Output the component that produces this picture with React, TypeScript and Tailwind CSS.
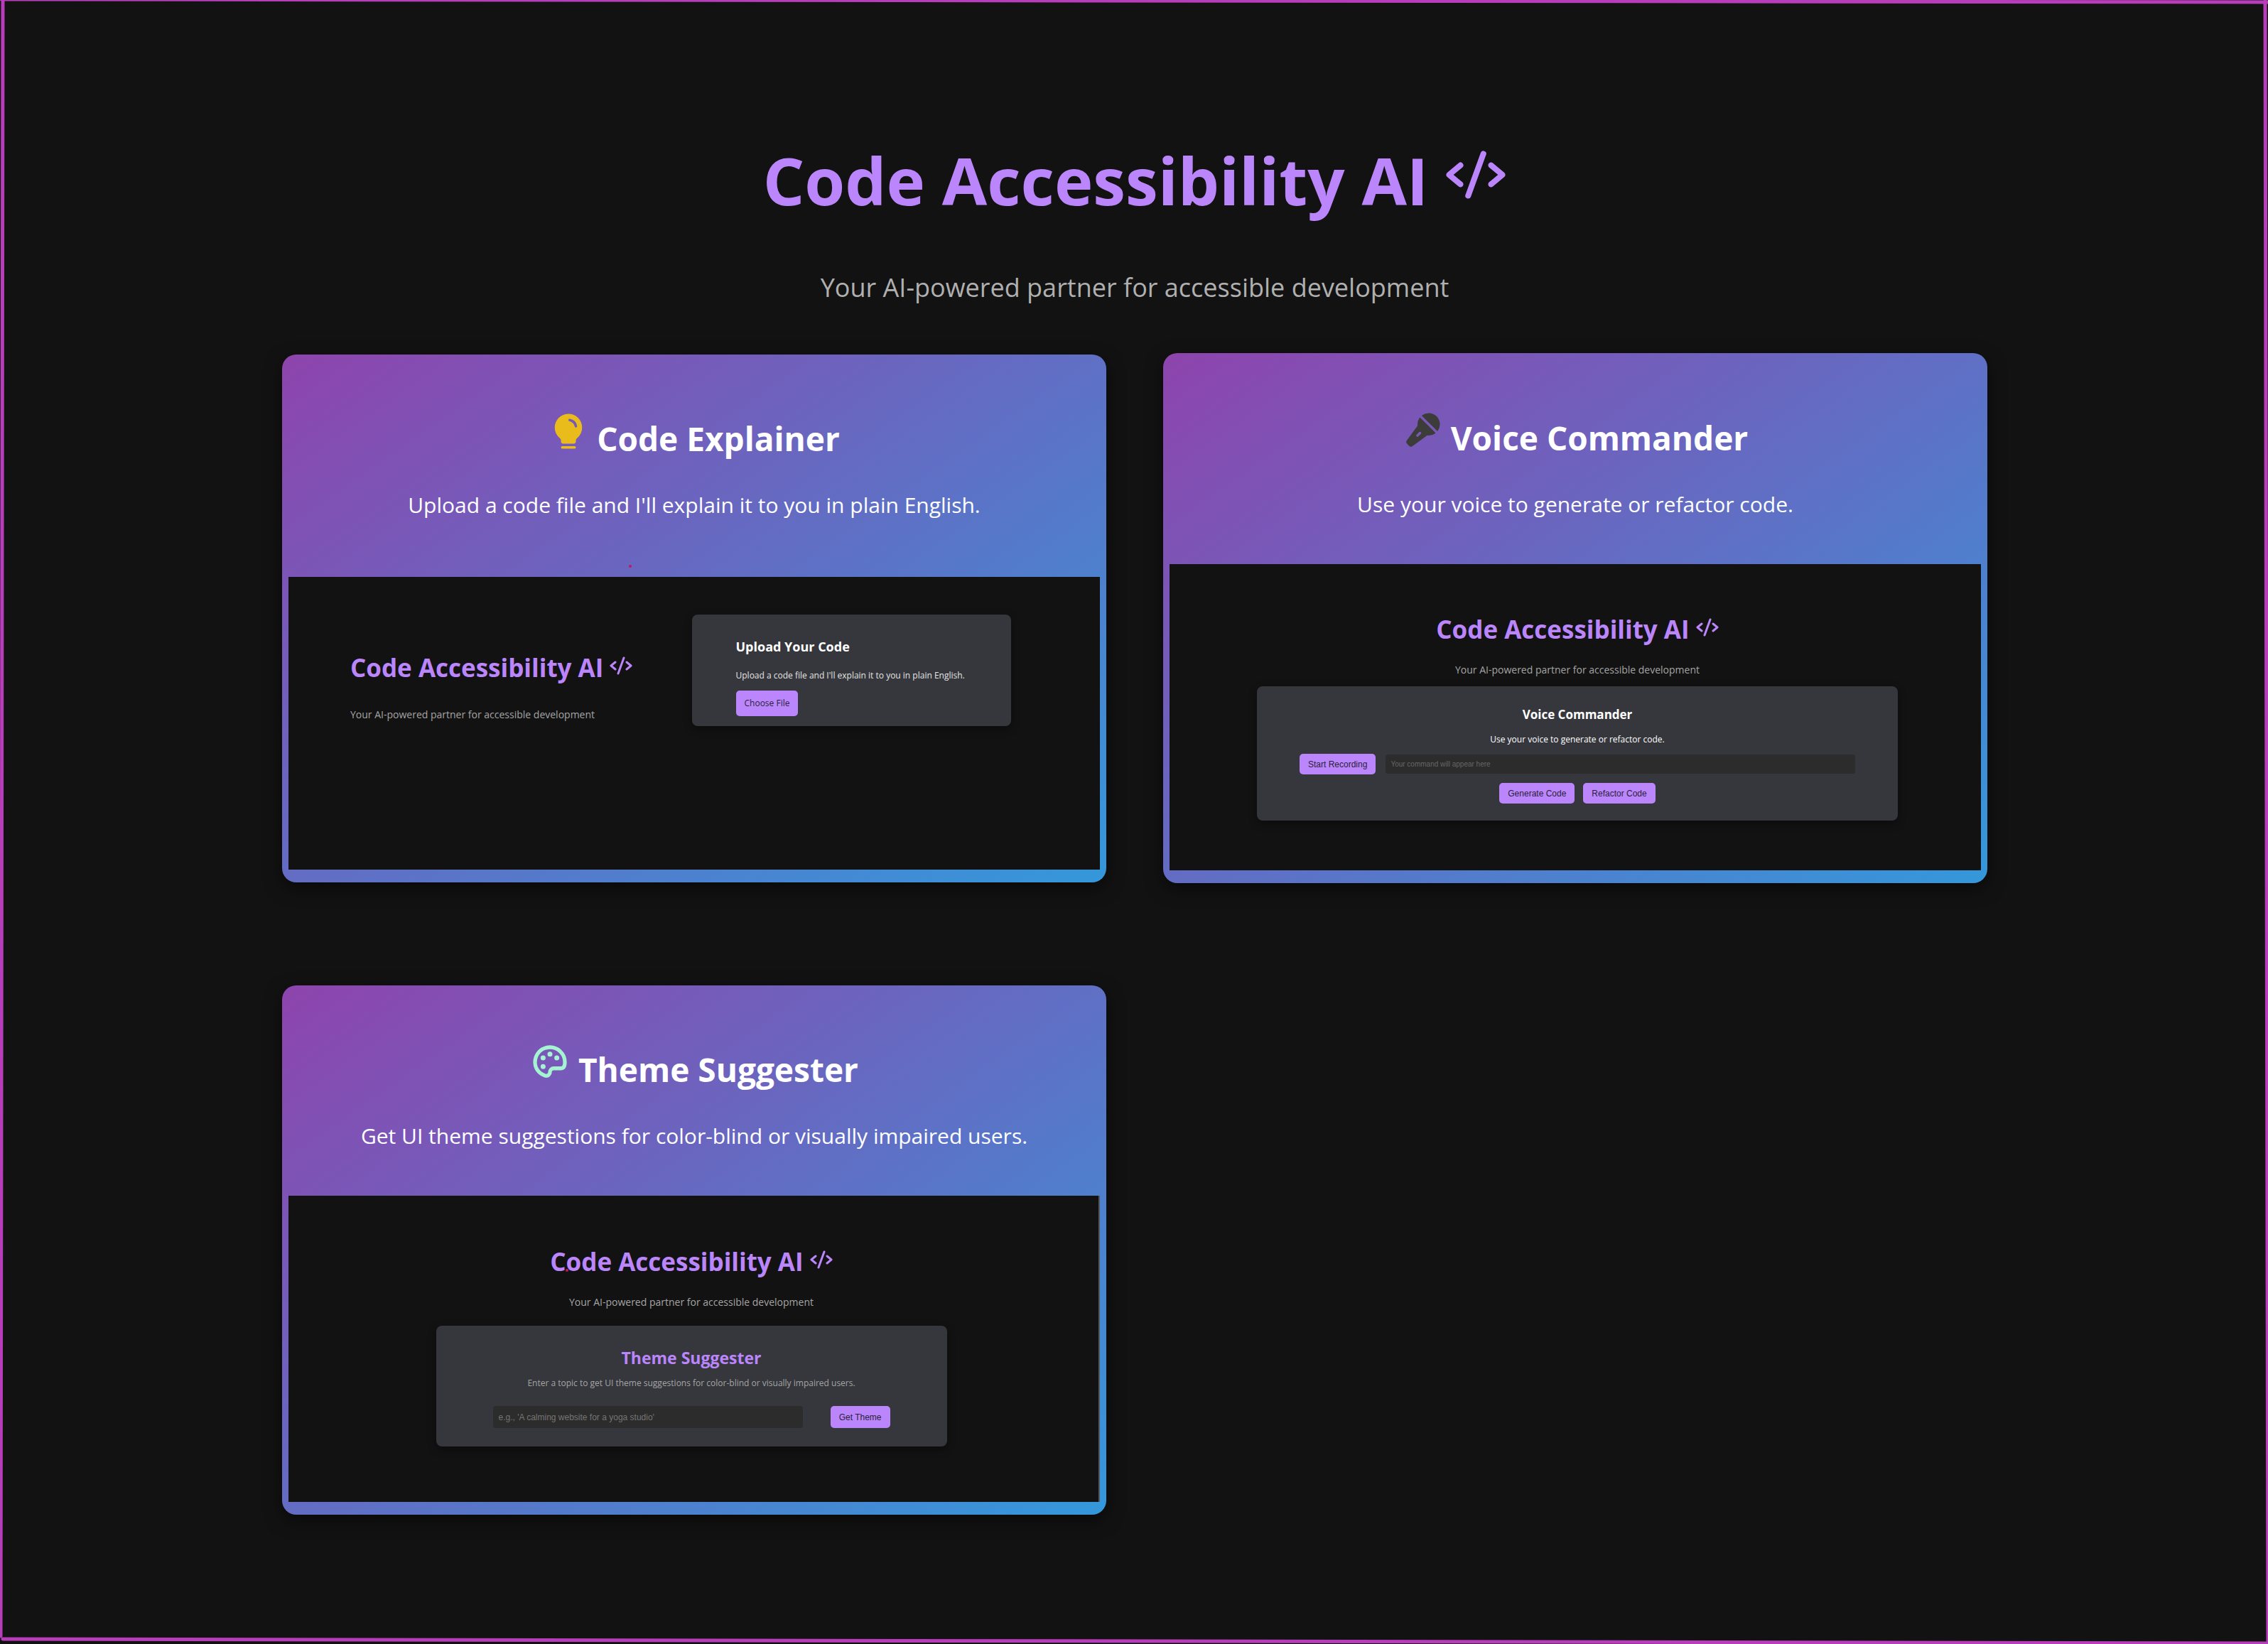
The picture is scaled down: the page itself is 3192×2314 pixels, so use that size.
import type { ReactNode } from 'react';
import {
  PiCodeBold,
  PiLightbulbFill,
  PiMicrophoneStageFill,
  PiPaletteBold,
} from 'react-icons/pi';

const ARIAL = "font-['Liberation_Sans',sans-serif]";
const BUTTON = 'shrink-0 cursor-pointer rounded-[5px] bg-[#bb86fc] px-3 text-center text-[#2a1f38]';

function Brand() {
  return (
    <h2 className="text-[35px] leading-[48px] font-bold whitespace-nowrap text-[#bb86fc]">
      Code Accessibility AI <PiCodeBold className="inline size-8 align-baseline" />
    </h2>
  );
}

function Tagline({ className }: { className: string }) {
  return (
    <p className={`text-[14px] leading-5 text-[#a5a5a5] ${className}`}>
      Your AI-powered partner for accessible development
    </p>
  );
}

function Panel({ className, children }: { className: string; children: ReactNode }) {
  return (
    <div className={`rounded-lg bg-[#36373c] shadow-[0_4px_12px_rgba(0,0,0,0.4)] ${className}`}>
      {children}
    </div>
  );
}

function FeatureCard({
  icon,
  title,
  text,
  head,
  children,
}: {
  icon: ReactNode;
  title: string;
  text: string;
  head: string;
  children: ReactNode;
}) {
  return (
    <section className="relative rounded-[20px] bg-[linear-gradient(145deg,#8e44ad,#3498db)] px-[9px] pb-[18px] shadow-[0_8px_24px_rgba(0,0,0,0.5)]">
      <div className={`text-center text-white ${head}`}>
        <h2 className="text-[46px] leading-[80px] font-bold">
          {icon} {title}
        </h2>
        <p className="mt-[30px] text-[30px] leading-[48px]">{text}</p>
      </div>
      {children}
    </section>
  );
}

function Frame() {
  return (
    <svg
      className="pointer-events-none absolute inset-0 size-full"
      viewBox="0 0 3192 2314"
      preserveAspectRatio="none"
      fill="none"
      stroke="#b83dba"
      strokeWidth="5"
      strokeLinecap="round"
      aria-hidden="true"
    >
      <path d="M2 -1L3192 3" />
      <path d="M4 0L1 2303" />
      <path d="M4 2307L3192 2313" />
      <path d="M3188 2L3192 2312" />
    </svg>
  );
}

export default function App() {
  return (
    <div className="relative min-h-screen overflow-hidden bg-[#121212] pt-[190px] pr-[395px] pb-[180px] pl-[397px] font-['Open_Sans',sans-serif]">
      <Frame />
      <header className="text-center">
        <h1 className="text-[92px] leading-[128px] font-bold text-[#bb86fc]">
          Code Accessibility AI <PiCodeBold className="inline size-[86px] align-baseline" />
        </h1>
        <p className="mt-[63px] text-[36px] leading-[48px] text-[#b0b0b0]">
          Your AI-powered partner for accessible development
        </p>
      </header>

      <main className="mt-[68px] grid grid-cols-2 items-center gap-x-20 gap-y-36">
        <FeatureCard
          icon={<PiLightbulbFill className="inline size-14 align-baseline text-[#e9bc1b]" />}
          title="Code Explainer"
          text="Upload a code file and I'll explain it to you in plain English."
          head="pt-[78px] pb-[77px]"
        >
          <span className="absolute top-[296px] left-[488px] size-1 rounded-full bg-[#c2185b]" />
          <div className="grid min-h-[412px] grid-cols-[480fr_449fr] items-start bg-[#121212] pt-[53px] pr-[125px] pl-[87px]">
            <div className="pt-[51px]">
              <Brand />
              <Tagline className="mt-8" />
            </div>
            <Panel className="px-[62px] pt-[33px] pb-[14px]">
              <h3 className="text-[18px] leading-6 font-bold text-white">Upload Your Code</h3>
              <p className="mt-[19px] text-[12px] leading-5 text-[#e4e4e4]">
                Upload a code file and I'll explain it to you in plain English.
              </p>
              <button type="button" className={`mt-[11px] block h-9 text-[12px] ${BUTTON}`}>
                Choose File
              </button>
            </Panel>
          </div>
        </FeatureCard>

        <FeatureCard
          icon={<PiMicrophoneStageFill className="inline size-14 align-baseline text-[#3c3c3a]" />}
          title="Voice Commander"
          text="Use your voice to generate or refactor code."
          head="pt-[79px] pb-[60px]"
        >
          <div className="flex min-h-[431px] flex-col items-center bg-[#121212] pt-[68px] pl-[6px] text-center">
            <Brand />
            <Tagline className="mt-[23px]" />
            <Panel className="mt-[13px] w-full max-w-[902px] px-[60px] pt-7 pb-6">
              <h3 className="text-[17px] leading-6 font-bold text-white">Voice Commander</h3>
              <p className="mt-[13px] text-[12px] leading-5 text-white">
                Use your voice to generate or refactor code.
              </p>
              <div className="mt-[10px] flex items-center gap-[14px]">
                <button type="button" className={`h-[29px] text-[12px] ${ARIAL} ${BUTTON}`}>
                  Start Recording
                </button>
                <input
                  aria-label="Your command"
                  placeholder="Your command will appear here"
                  className={`h-[27px] min-w-0 flex-1 rounded-[4px] bg-[#2c2c2c] px-[7px] text-[10px] text-white placeholder:text-[#666666] ${ARIAL}`}
                />
              </div>
              <div className="mt-3 flex justify-center gap-3">
                <button type="button" className={`h-[29px] text-[12px] ${ARIAL} ${BUTTON}`}>
                  Generate Code
                </button>
                <button type="button" className={`h-[29px] text-[12px] ${ARIAL} ${BUTTON}`}>
                  Refactor Code
                </button>
              </div>
            </Panel>
          </div>
        </FeatureCard>

        <FeatureCard
          icon={<PiPaletteBold className="inline size-14 align-baseline text-[#a5f3d3]" />}
          title="Theme Suggester"
          text="Get UI theme suggestions for color-blind or visually impaired users."
          head="pt-[78px] pb-[60px]"
        >
          <div className="flex min-h-[431px] flex-col items-center border-r-2 border-[#56585f] bg-[#121212] pt-[69px] pr-[6px] text-center">
            <div className="relative">
              <Brand />
              <span className="absolute top-[34px] left-[22px] size-1 rounded-full bg-[#c2185b]" />
            </div>
            <Tagline className="mt-[23px]" />
            <Panel className="mt-[23px] w-full max-w-[719px] px-20 pt-[29px] pb-[26px]">
              <h3 className="text-[23px] leading-8 font-bold text-[#bb86fc]">Theme Suggester</h3>
              <p className="mt-[10px] text-[12px] leading-5 text-[#a5a5a5]">
                Enter a topic to get UI theme suggestions for color-blind or visually impaired users.
              </p>
              <div className="mt-[22px] flex items-center gap-[39px]">
                <input
                  aria-label="Theme topic"
                  placeholder="e.g., 'A calming website for a yoga studio'"
                  className={`h-[31px] min-w-0 flex-1 rounded-[4px] bg-[#2c2c2c] px-2 text-[12px] text-white placeholder:text-[#757575] ${ARIAL}`}
                />
                <button type="button" className={`h-[31px] text-[12px] ${ARIAL} ${BUTTON}`}>
                  Get Theme
                </button>
              </div>
            </Panel>
          </div>
        </FeatureCard>
      </main>
    </div>
  );
}
